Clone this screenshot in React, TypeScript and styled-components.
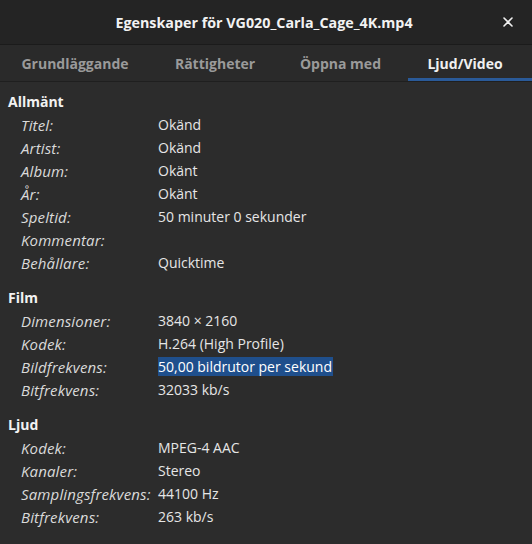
import React from 'react';
import styled, { createGlobalStyle } from 'styled-components';

type Row = { label: string; value: string; selected?: boolean };
type Section = { title: string; rows: Row[] };

const sections: Section[] = [
	{
		title: 'Allmänt',
		rows: [
			{ label: 'Titel:', value: 'Okänd' },
			{ label: 'Artist:', value: 'Okänd' },
			{ label: 'Album:', value: 'Okänt' },
			{ label: 'År:', value: 'Okänt' },
			{ label: 'Speltid:', value: '50 minuter 0 sekunder' },
			{ label: 'Kommentar:', value: '' },
			{ label: 'Behållare:', value: 'Quicktime' }
		]
	},
	{
		title: 'Film',
		rows: [
			{ label: 'Dimensioner:', value: '3840 × 2160' },
			{ label: 'Kodek:', value: 'H.264 (High Profile)' },
			{ label: 'Bildfrekvens:', value: '50,00 bildrutor per sekund', selected: true },
			{ label: 'Bitfrekvens:', value: '32033 kb/s' }
		]
	},
	{
		title: 'Ljud',
		rows: [
			{ label: 'Kodek:', value: 'MPEG-4 AAC' },
			{ label: 'Kanaler:', value: 'Stereo' },
			{ label: 'Samplingsfrekvens:', value: '44100 Hz' },
			{ label: 'Bitfrekvens:', value: '263 kb/s' }
		]
	}
];

// width of each tab cell, the last one carries the underline
const tabs = [
	{ name: 'Grundläggande', width: 150 },
	{ name: 'Rättigheter', width: 130 },
	{ name: 'Öppna med', width: 121 },
	{ name: 'Ljud/Video', width: 124 }
];

const GlobalStyle = createGlobalStyle`
	html, body {
		margin: 0;
		padding: 0;
		background: #2c2c2c;
	}
	body {
		font-family: 'Open Sans', 'Noto Sans', sans-serif;
		color: #e8e8e8;
	}
`;

const Window = styled.div`
	width: 532px;
	height: 544px;
	display: flex;
	flex-direction: column;
	background: #2c2c2c;
	overflow: hidden;
`;

const TitleBar = styled.div`
	height: 44px;
	flex: none;
	display: flex;
	align-items: center;
	justify-content: center;
	position: relative;
	background: #242424;
	border-bottom: 1px solid #1b1b1b;
`;

const Title = styled.div`
	font-size: 14.3px;
	font-weight: 700;
	color: #f2f2f2;
	margin-right: 4px;
`;

const CloseButton = styled.div`
	position: absolute;
	right: 17px;
	top: 15px;
	width: 14px;
	height: 14px;
	display: flex;
	align-items: center;
	justify-content: center;
`;

const TabBar = styled.div`
	height: 36px;
	flex: none;
	display: flex;
	background: #2a2a2a;
	border-bottom: 1px solid #1f1f1f;
`;

const Tab = styled.div<{ $active?: boolean; $width: number }>`
	width: ${(p) => p.$width}px;
	flex: none;
	display: flex;
	align-items: center;
	justify-content: center;
	font-size: 14px;
	font-weight: 700;
	color: ${(p) => (p.$active ? '#f0f0f0' : '#9a9a9a')};
	border-bottom: 3px solid ${(p) => (p.$active ? '#2a5a98' : 'transparent')};
	padding-top: 3px;
	padding-right: ${(p) => (p.$active ? 10 : 0)}px;
	margin-left: ${(p) => (p.$active ? 7 : 0)}px;
	box-sizing: border-box;
`;

const Content = styled.div`
	padding: 9px 0 0 8px;
	display: flex;
	flex-direction: column;
	gap: 13px;
`;

const Group = styled.div`
	display: flex;
	flex-direction: column;
`;

const GroupTitle = styled.div`
	font-size: 14px;
	font-weight: 700;
	color: #f2f2f2;
	height: 22px;
	line-height: 22px;
`;

const Grid = styled.div`
	display: grid;
	grid-template-columns: 137px 1fr;
	grid-auto-rows: 23px;
	padding-left: 13px;
	align-items: center;
`;

const Label = styled.div`
	font-size: 15px;
	font-style: italic;
	letter-spacing: 0.15px;
	color: #dadada;
`;

const Value = styled.div<{ $selected?: boolean }>`
	font-size: 14px;
	justify-self: start;
	padding: 0 1px 0 0;
	background: ${(p) => (p.$selected ? '#1f4f8c' : 'transparent')};
	color: ${(p) => (p.$selected ? '#ffffff' : '#e6e6e6')};
`;

export default function App() {
	return (
		<Window>
			<GlobalStyle />
			<TitleBar>
				<Title>Egenskaper för VG020_Carla_Cage_4K.mp4</Title>
				<CloseButton>
					<svg width='10' height='10' viewBox='0 0 10 10'>
						<path d='M1 1 L9 9 M9 1 L1 9' stroke='#f0f0f0' strokeWidth='1.6' strokeLinecap='round' />
					</svg>
				</CloseButton>
			</TitleBar>
			<TabBar>
				{tabs.map((t, i) => (
					<Tab key={t.name} $width={t.width} $active={i === tabs.length - 1}>
						{t.name}
					</Tab>
				))}
			</TabBar>
			<Content>
				{sections.map((s) => (
					<Group key={s.title}>
						<GroupTitle>{s.title}</GroupTitle>
						<Grid>
							{s.rows.map((r) => (
								<React.Fragment key={r.label}>
									<Label>{r.label}</Label>
									<Value $selected={r.selected}>{r.value}</Value>
								</React.Fragment>
							))}
						</Grid>
					</Group>
				))}
			</Content>
		</Window>
	);
}
